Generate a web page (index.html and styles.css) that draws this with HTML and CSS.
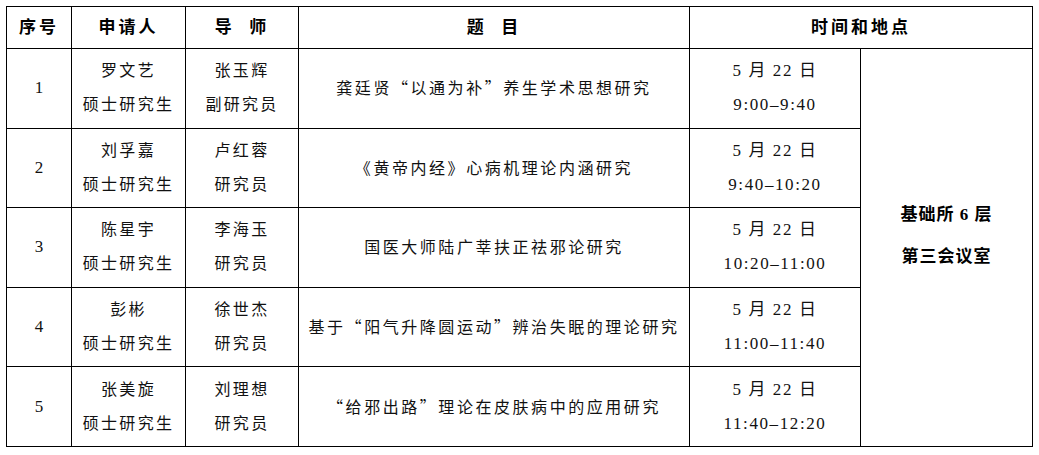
FILE: index.html
```html
<!DOCTYPE html>
<html lang="zh-CN">
<head>
<meta charset="utf-8">
<title>答辩安排</title>
<link rel="stylesheet" href="styles.css">
</head>
<body>
<table class="schedule">
  <colgroup>
    <col class="c-no">
    <col class="c-app">
    <col class="c-tutor">
    <col class="c-title">
    <col class="c-time">
    <col class="c-place">
  </colgroup>
  <thead>
    <tr class="head">
      <th>序号</th>
      <th>申请人</th>
      <th>导&nbsp;&nbsp;师</th>
      <th>题&nbsp;&nbsp;目</th>
      <th colspan="2">时间和地点</th>
    </tr>
  </thead>
  <tbody>
    <tr class="row">
      <td class="num">1</td>
      <td>罗文艺<br>硕士研究生</td>
      <td>张玉辉<br>副研究员</td>
      <td class="topic">龚廷贤“以通为补”养生学术思想研究</td>
      <td class="time">5 月 22 日<br>9:00–9:40</td>
      <td class="place" rowspan="5">基础所 6 层<br>第三会议室</td>
    </tr>
    <tr class="row">
      <td class="num">2</td>
      <td>刘孚嘉<br>硕士研究生</td>
      <td>卢红蓉<br>研究员</td>
      <td class="topic">《黄帝内经》心病机理论内涵研究</td>
      <td class="time">5 月 22 日<br>9:40–10:20</td>
    </tr>
    <tr class="row">
      <td class="num">3</td>
      <td>陈星宇<br>硕士研究生</td>
      <td>李海玉<br>研究员</td>
      <td class="topic">国医大师陆广莘扶正祛邪论研究</td>
      <td class="time">5 月 22 日<br>10:20–11:00</td>
    </tr>
    <tr class="row">
      <td class="num">4</td>
      <td>彭彬<br>硕士研究生</td>
      <td>徐世杰<br>研究员</td>
      <td class="topic">基于“阳气升降圆运动”辨治失眠的理论研究</td>
      <td class="time">5 月 22 日<br>11:00–11:40</td>
    </tr>
    <tr class="row">
      <td class="num">5</td>
      <td>张美旋<br>硕士研究生</td>
      <td>刘理想<br>研究员</td>
      <td class="topic">“给邪出路”理论在皮肤病中的应用研究</td>
      <td class="time">5 月 22 日<br>11:40–12:20</td>
    </tr>
  </tbody>
</table>
</body>
</html>
```

FILE: styles.css
```css
html, body {
  background: #ffffff;
}
body {
  margin: 6px;
  font-family: "Liberation Serif", "Noto Sans CJK SC", serif;
  color: #111111;
}
.schedule {
  border-collapse: collapse;
  width: 1026px;
  table-layout: fixed;
}
.c-no { width: 65px; }
.c-app { width: 114px; }
.c-tutor { width: 113px; }
.c-title { width: 391px; }
.c-time { width: 171px; }
.c-place { width: 172px; }

.schedule th,
.schedule td {
  border: 1.3px solid #000;
  padding: 0;
  text-align: center;
  vertical-align: middle;
}
.head {
  height: 42px;
}
.head th {
  font-size: 17px;
  font-weight: bold;
  letter-spacing: 3px;
  line-height: 20px;
  color: #000;
}
.row {
  height: 79.6px;
}
.row td {
  font-size: 16px;
  line-height: 34px;
  letter-spacing: 2.3px;
}
.row td.num {
  font-size: 17px;
  letter-spacing: 0;
}
.row td.topic {
  font-family: "Noto Sans CJK SC", sans-serif;
  font-feature-settings: "fwid" 1;
  letter-spacing: 2.55px;
  padding-bottom: 2px;
}
.row td.time {
  font-size: 17px;
  letter-spacing: 1.6px;
}
.row td.place {
  font-size: 17px;
  font-weight: bold;
  letter-spacing: 1px;
  line-height: 42px;
  padding-bottom: 22px;
  color: #000;
}
```
